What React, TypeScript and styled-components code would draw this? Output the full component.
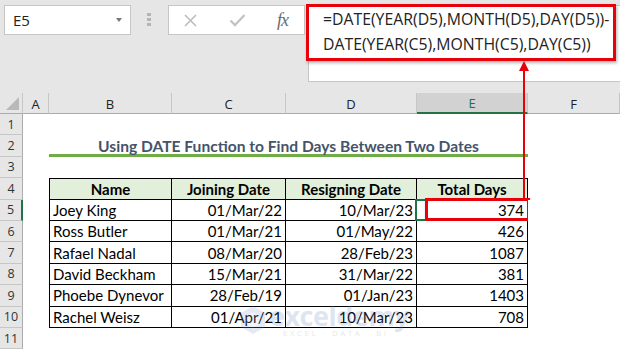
import React from "react";
import styled, { createGlobalStyle } from "styled-components";

const GlobalStyle = createGlobalStyle`
  html, body {
    margin: 0;
    padding: 0;
    background: #e6e6e6;
  }
  * {
    box-sizing: border-box;
  }
`;

const Page = styled.div`
  position: relative;
  width: 620px;
  height: 351px;
  overflow: hidden;
  background: #e6e6e6;
  font-family: Lato, "Liberation Sans", sans-serif;
`;

const TopBar = styled.div`
  display: flex;
  align-items: flex-start;
  height: 93px;
  padding: 5px 0 0 4px;
`;

const NameBox = styled.div`
  display: flex;
  align-items: center;
  justify-content: space-between;
  width: 127px;
  height: 30px;
  padding: 0 8px 0 8px;
  background: #fff;
  border: 1px solid #c6c6c6;
  font-family: "Open Sans", sans-serif;
  font-size: 15px;
  color: #222;
`;

const DropArrow = styled.span`
  width: 0;
  height: 0;
  border-left: 3.5px solid transparent;
  border-right: 3.5px solid transparent;
  border-top: 4px solid #777;
`;

const Grip = styled.div`
  display: flex;
  flex-direction: column;
  gap: 2px;
  width: 37px;
  padding: 8px 0 0 16px;
`;

const GripDot = styled.span`
  width: 4px;
  height: 3px;
  background: #b4b4b4;
`;

const FuncBox = styled.div`
  display: flex;
  align-items: center;
  justify-content: space-between;
  width: 137px;
  height: 30px;
  padding: 0 16px 0 14px;
  background: #fff;
  border: 1px solid #c6c6c6;
`;

const FxText = styled.span`
  font-family: "Liberation Serif", serif;
  font-style: italic;
  font-size: 18px;
  color: #6b6b6b;
  letter-spacing: -1px;
`;

const FormulaArea = styled.div`
  flex: 1;
  height: 77px;
  margin-left: 3px;
  background: #fff;
  border-left: 1px solid #c6c6c6;
  border-top: 1px solid #c6c6c6;
  border-bottom: 1px solid #c6c6c6;
`;

const FormulaBox = styled.div`
  width: 310px;
  height: 57px;
  margin: -2px 0 0 -3px;
  padding: 0 0 0 14px;
  border: 3px solid #e8000b;
  box-shadow: 1px 2px 3px rgba(0, 0, 0, 0.3);
  font-family: "Open Sans", sans-serif;
  font-size: 15.8px;
  line-height: 25px;
  color: #222;
  white-space: nowrap;
`;

const Sheet = styled.div`
  display: grid;
  grid-template-columns: 23px 26px 123px 114px 131px 111px 92px;
  grid-template-rows: 21px repeat(11, 21.4px) 1fr;
  height: 258px;
  background: #fff;
`;

const Corner = styled.div`
  position: relative;
  background: #e6e6e6;
  border-right: 1px solid #c6c6c6;
  border-bottom: 1px solid #ababab;
  &::after {
    content: "";
    position: absolute;
    right: 3px;
    bottom: 3px;
    width: 0;
    height: 0;
    border-left: 13px solid transparent;
    border-bottom: 13px solid #b9b9b9;
  }
`;

const ColHead = styled.div<{ $active?: boolean }>`
  display: flex;
  align-items: center;
  justify-content: center;
  padding-top: 1px;
  background: ${(p) => (p.$active ? "#d2d2d2" : "#e6e6e6")};
  border-right: 1px solid #c6c6c6;
  border-bottom: ${(p) => (p.$active ? "2px solid #217346" : "1px solid #ababab")};
  font-family: "Open Sans", sans-serif;
  font-size: 13px;
  color: ${(p) => (p.$active ? "#217346" : "#222")};
`;

const RowHead = styled.div<{ $active?: boolean }>`
  display: flex;
  align-items: center;
  justify-content: center;
  background: #e6e6e6;
  border-right: ${(p) => (p.$active ? "2px solid #217346" : "1px solid #ababab")};
  border-bottom: 1px solid #c6c6c6;
  font-family: "Open Sans", sans-serif;
  font-size: 12.5px;
  color: #333;
`;

const Cell = styled.div<{
  $align?: "left" | "right" | "center";
  $border?: boolean;
  $first?: boolean;
  $top?: boolean;
  $head?: boolean;
  $span?: number;
}>`
  position: relative;
  display: flex;
  align-items: center;
  justify-content: ${(p) =>
    p.$align === "right" ? "flex-end" : p.$align === "center" ? "center" : "flex-start"};
  padding: 0 3px;
  grid-column: ${(p) => (p.$span ? `span ${p.$span}` : "auto")};
  background: ${(p) => (p.$head ? "#e2efda" : "#fff")};
  border-right: ${(p) => (p.$border ? "1px solid #000" : "none")};
  border-bottom: ${(p) => (p.$border ? "1px solid #000" : "none")};
  border-left: ${(p) => (p.$first ? "1px solid #000" : "none")};
  border-top: ${(p) => (p.$top ? "1px solid #000" : "none")};
  font-size: 15px;
  font-weight: ${(p) => (p.$head ? 700 : 400)};
  color: #000;
  white-space: nowrap;
`;

const TitleCell = styled.div`
  grid-column: span 4;
  display: flex;
  align-items: center;
  justify-content: center;
  padding-top: 2px;
  border-bottom: 3px solid #70ad47;
  font-size: 15.6px;
  font-weight: 700;
  color: #44546a;
`;

const Selected = styled.div`
  position: absolute;
  inset: -1px -2px -1px -2px;
  border: 2px solid #217346;
  pointer-events: none;
`;

const Callout = styled.div`
  position: absolute;
  left: 8px;
  top: -2px;
  right: -3px;
  bottom: -1px;
  border: 3px solid #e8000b;
  box-shadow: 1px 2px 3px rgba(0, 0, 0, 0.3);
`;

const CalloutText = styled.span`
  position: relative;
  z-index: 1;
`;

const Arrow = styled.svg`
  position: absolute;
  left: 518px;
  top: 60px;
  pointer-events: none;
`;

const Watermark = styled.div`
  position: absolute;
  left: 240px;
  top: 302px;
  display: flex;
  align-items: center;
  gap: 3px;
  opacity: 0.2;
  pointer-events: none;
`;

const WmWords = styled.div`
  display: flex;
  flex-direction: column;
  line-height: 1;
`;

const WmName = styled.span`
  font-family: "Open Sans", sans-serif;
  font-weight: 700;
  font-size: 27px;
  color: #5b7fbf;
  letter-spacing: -0.5px;
`;

const WmTag = styled.span`
  font-family: "Open Sans", sans-serif;
  font-size: 8px;
  letter-spacing: 2.5px;
  color: #8a8a8a;
  padding-left: 14px;
`;

const columns = ["A", "B", "C", "D", "E", "F"];

const rows = [
  ["Joey King", "01/Mar/22", "10/Mar/23", "374"],
  ["Ross Butler", "01/Mar/21", "01/May/22", "426"],
  ["Rafael Nadal", "08/Mar/20", "28/Feb/23", "1087"],
  ["David Beckham", "15/Mar/21", "31/Mar/22", "381"],
  ["Phoebe Dynevor", "28/Feb/19", "01/Jan/23", "1403"],
  ["Rachel Weisz", "01/Apr/21", "10/Mar/23", "708"],
];

const headers = ["Name", "Joining Date", "Resigning Date", "Total Days"];

const Blank = () => <Cell />;

export default function App() {
  return (
    <Page>
      <GlobalStyle />
      <TopBar>
        <NameBox>
          <span>E5</span>
          <DropArrow />
        </NameBox>
        <Grip>
          <GripDot />
          <GripDot />
          <GripDot />
        </Grip>
        <FuncBox>
          <svg width="15" height="15" viewBox="0 0 15 15">
            <path d="M2 2 L13 13 M13 2 L2 13" stroke="#bdbdbd" strokeWidth="1.6" />
          </svg>
          <svg width="17" height="14" viewBox="0 0 17 14">
            <path d="M1.5 7.5 L6 12 L15.5 2" stroke="#c4c4c4" strokeWidth="2.4" fill="none" />
          </svg>
          <FxText>fx</FxText>
        </FuncBox>
        <FormulaArea>
          <FormulaBox>
            =DATE(YEAR(D5),MONTH(D5),DAY(D5))-
            <br />
            DATE(YEAR(C5),MONTH(C5),DAY(C5))
          </FormulaBox>
        </FormulaArea>
      </TopBar>

      <Sheet>
        <Corner />
        {columns.map((c) => (
          <ColHead key={c} $active={c === "E"}>
            {c}
          </ColHead>
        ))}

        <RowHead>1</RowHead>
        <Blank />
        <Cell $span={4} />
        <Blank />

        <RowHead>2</RowHead>
        <Blank />
        <TitleCell>Using DATE Function to Find Days Between Two Dates</TitleCell>
        <Blank />

        <RowHead>3</RowHead>
        <Blank />
        <Cell $span={4} />
        <Blank />

        <RowHead>4</RowHead>
        <Blank />
        {headers.map((h, i) => (
          <Cell key={h} $head $border $top $first={i === 0} $align="center">
            {h}
          </Cell>
        ))}
        <Blank />

        {rows.map((r, ri) => (
          <React.Fragment key={r[0]}>
            <RowHead $active={ri === 0}>{ri + 5}</RowHead>
            <Blank />
            {r.map((v, ci) => (
              <Cell key={ci} $border $first={ci === 0} $align={ci === 0 ? "left" : "right"}>
                {ri === 0 && ci === 3 ? (
                  <>
                    <Selected />
                    <Callout />
                    <CalloutText>{v}</CalloutText>
                  </>
                ) : (
                  v
                )}
              </Cell>
            ))}
            <Blank />
          </React.Fragment>
        ))}

        <RowHead>11</RowHead>
        <Blank />
        <Cell $span={4} />
        <Blank />
      </Sheet>

      <Arrow width="12" height="142" viewBox="0 0 12 142">
        <line x1="6" y1="8" x2="6" y2="141" stroke="#e8000b" strokeWidth="2" />
        <polygon points="6,1 11,11 1,11" fill="#e8000b" />
      </Arrow>

      <Watermark>
        <svg width="26" height="30" viewBox="0 0 26 30">
          <polygon points="13,1 25,8 25,22 13,29 1,22 1,8" fill="#7b96c8" />
          <polygon points="13,7 20,11 20,19 13,23 6,19 6,11" fill="#b9c9e6" />
        </svg>
        <WmWords>
          <WmName>exceldemy</WmName>
          <WmTag>EXCEL · DATA · BI</WmTag>
        </WmWords>
      </Watermark>
    </Page>
  );
}
